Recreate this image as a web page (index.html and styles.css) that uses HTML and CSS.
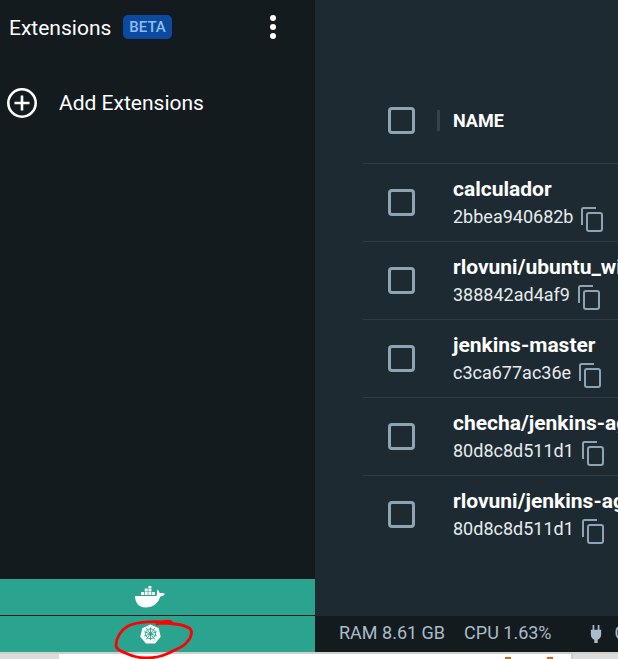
FILE: index.html
```html
<!DOCTYPE html>
<html lang="en">
<head>
    <meta charset="UTF-8">
    <title>Docker Desktop</title>
    <link rel="stylesheet" href="styles.css">
</head>
<body>
<div class="app">
    <div class="sidebar">
        <div class="side-head">
            <span class="side-title">Extensions</span>
            <span class="beta">BETA</span>
            <svg class="more" width="6" height="24" viewBox="0 0 6 24"><circle cx="3" cy="3" r="3"/><circle cx="3" cy="12" r="3"/><circle cx="3" cy="21" r="3"/></svg>
        </div>
        <div class="add-row">
            <svg width="32" height="32" viewBox="0 0 32 32" fill="none" stroke="#fff"><circle cx="16" cy="16" r="13.700" stroke-width="2.600"/><path d="M16 8.500v15M8.500 16h15" stroke-width="2.600"/></svg>
            <span>Add Extensions</span>
        </div>
        <div class="side-spacer"></div>
        <div class="green-btn docker">
            <svg width="30" height="22" viewBox="0 0 30 22" fill="#fff"><path d="M6 6h3v3H6zM9.700 6h3v3h-3zM13.400 6h3v3h-3zM9.700 2.500h3v3h-3zM13.400 2.500h3v3h-3zM13.400-1h3v3h-3zM17 6h3v3h-3z"/><path d="M0 10h21.500c.6-1 .4-4 .8-6.500 1.200.8 2.200 2.500 2.500 4 1.500-.7 3.500-.5 5 .3-.8 1.800-2.500 2.800-4.500 2.700C23.500 17 18 21.500 10.500 21.500 3.500 21.500 0 16 0 10z"/></svg>
        </div>
        <div class="green-btn kube">
            <svg width="21" height="20" viewBox="0 0 22 22" preserveAspectRatio="none"><path d="M11 .5l8.600 4.100 2.100 9.300-5.900 7.500H6.200L.3 13.900l2.100-9.300z" fill="#fff"/><g fill="none" stroke="#2ba48f" stroke-width="1"><circle cx="11" cy="10.800" r="5.400"/><path d="M11 3.800v14M4.500 8.500l13 4.700M17.500 8.500l-13 4.700M6.500 17l9-12.500M15.500 17l-9-12.500"/></g></svg>
        </div>
    </div>
    <div class="main">
        <div class="table">
            <div class="table-head">
                <span class="check"></span>
                <span class="divider"></span>
                <span class="name-col">NAME</span>
            </div>
            <div class="row">
                <span class="check"></span>
                <div class="cell">
                    <div class="name">calculador</div>
                    <div class="id">2bbea940682b <svg class="copy" width="22" height="25" viewBox="0 0 22 25" fill="none" stroke="#8fa4b3" stroke-width="2"><path d="M1 18V2.500Q1 1 2.500 1H15"/><rect x="6" y="6" width="15" height="18" rx="2"/></svg></div>
                </div>
            </div>
            <div class="row">
                <span class="check"></span>
                <div class="cell">
                    <div class="name">rlovuni/ubuntu_wi</div>
                    <div class="id">388842ad4af9 <svg class="copy" width="22" height="25" viewBox="0 0 22 25" fill="none" stroke="#8fa4b3" stroke-width="2"><path d="M1 18V2.500Q1 1 2.500 1H15"/><rect x="6" y="6" width="15" height="18" rx="2"/></svg></div>
                </div>
            </div>
            <div class="row">
                <span class="check"></span>
                <div class="cell">
                    <div class="name">jenkins-master</div>
                    <div class="id">c3ca677ac36e <svg class="copy" width="22" height="25" viewBox="0 0 22 25" fill="none" stroke="#8fa4b3" stroke-width="2"><path d="M1 18V2.500Q1 1 2.500 1H15"/><rect x="6" y="6" width="15" height="18" rx="2"/></svg></div>
                </div>
            </div>
            <div class="row">
                <span class="check"></span>
                <div class="cell">
                    <div class="name">checha/jenkins-ag</div>
                    <div class="id">80d8c8d511d1 <svg class="copy" width="22" height="25" viewBox="0 0 22 25" fill="none" stroke="#8fa4b3" stroke-width="2"><path d="M1 18V2.500Q1 1 2.500 1H15"/><rect x="6" y="6" width="15" height="18" rx="2"/></svg></div>
                </div>
            </div>
            <div class="row last">
                <span class="check"></span>
                <div class="cell">
                    <div class="name">rlovuni/jenkins-ag</div>
                    <div class="id">80d8c8d511d1 <svg class="copy" width="22" height="25" viewBox="0 0 22 25" fill="none" stroke="#8fa4b3" stroke-width="2"><path d="M1 18V2.500Q1 1 2.500 1H15"/><rect x="6" y="6" width="15" height="18" rx="2"/></svg></div>
                </div>
            </div>
        </div>
        <div class="status">
            <span>RAM 8.61 GB</span>
            <span class="cpu">CPU 1.63%</span>
            <svg class="plug" width="12" height="18" viewBox="0 0 14 19" fill="#a9bcc9" preserveAspectRatio="none"><path d="M3 0h2v5H3zM9 0h2v5H9zM1 5h12v5c0 3-2 5-4 5.500V19H5v-3.500C3 15 1 13 1 10z"/></svg>
            <span>C</span>
        </div>
    </div>
</div>
<div class="taskbar">
    <div class="window">
        <span class="mark"></span>
        <span class="mark"></span>
    </div>
</div>
<svg class="scribble" width="84" height="42" viewBox="0 0 84 42" fill="none" stroke="#f00" stroke-width="2.800" stroke-linecap="round" stroke-linejoin="round"><path d="M44 6C50 3 60 2 58 5 45 3 25 3 15 8 8 12 3 20 3 27 3 31 6 32 10 34 18 38 25 40 33 40 42 40 50 38 56 35 62 31 70 30 74 24 79 19 80 12 76 10 70 6 60 5 44 5"/></svg>
</body>
</html>
```

FILE: styles.css
```css
html, body {
    margin: 0;
    padding: 0;
}
body {
    width: 618px;
    height: 659px;
    overflow: hidden;
    position: relative;
    font-family: Roboto, "Liberation Sans", sans-serif;
    background: #dddcd9;
}
.app {
    display: flex;
    height: 652px;
}
.sidebar {
    width: 315px;
    flex-shrink: 0;
    display: flex;
    flex-direction: column;
    background: #141b1f;
    color: #fff;
}
.side-head {
    display: flex;
    align-items: center;
    height: 54px;
    padding-left: 9px;
    font-size: 21px;
}
.side-title {
    padding-top: 2px;
}
.beta {
    margin-left: 12px;
    padding: 0 6px;
    height: 24px;
    line-height: 24px;
    border-radius: 5px;
    background: #0b4a9f;
    color: #8ebdf2;
    font-size: 15px;
    font-weight: 500;
}
.more {
    margin-left: 98px;
    fill: #fff;
}
.add-row {
    display: flex;
    align-items: center;
    gap: 21px;
    height: 32px;
    margin-top: 33px;
    padding-left: 6px;
    font-size: 21px;
}
.side-spacer {
    flex: 1;
}
.green-btn {
    display: flex;
    align-items: center;
    justify-content: center;
    box-sizing: border-box;
    padding-right: 15px;
    background: #2ba48f;
}
.docker {
    height: 37px;
    border-bottom: 1px solid #10201f;
}
.kube {
    height: 36px;
}
.main {
    flex: 1;
    min-width: 0;
    display: flex;
    flex-direction: column;
    background: #1e2a31;
}
.table {
    flex: 1;
    padding: 82px 0 0 48px;
    overflow: hidden;
}
.table-head {
    display: flex;
    align-items: flex-start;
    height: 81px;
    border-bottom: 1px solid #2f3b41;
}
.check {
    display: block;
    box-sizing: border-box;
    width: 27px;
    height: 27px;
    margin-left: 25px;
    border: 3px solid #8fa4b3;
    border-radius: 4px;
    flex-shrink: 0;
}
.table-head .check {
    margin-top: 25px;
}
.divider {
    width: 3px;
    height: 21px;
    margin: 28px 0 0 22px;
    background: #33424d;
}
.name-col {
    margin: 28px 0 0 13px;
    color: #fff;
    font-size: 18px;
    font-weight: 700;
    line-height: 21px;
}
.row {
    display: flex;
    align-items: center;
    height: 77px;
    border-bottom: 1px solid #2f3b41;
    white-space: nowrap;
}
.row.last {
    border-bottom: 0;
}
.cell {
    margin-left: 38px;
    color: #fff;
}
.name {
    font-size: 21px;
    font-weight: 700;
    line-height: 27px;
}
.id {
    display: flex;
    align-items: flex-start;
    gap: 8px;
    font-size: 18px;
    line-height: 27px;
    height: 27px;
    color: #e6ebee;
}
.copy {
    margin-top: 4px;
}
.status {
    display: flex;
    align-items: center;
    box-sizing: border-box;
    height: 36px;
    flex-shrink: 0;
    background: #141b1f;
    color: #a9bcc9;
    font-size: 18px;
    padding: 0 0 3px 24px;
    white-space: nowrap;
}
.cpu {
    margin-left: 19px;
}
.plug {
    flex-shrink: 0;
    margin: 3px 13px 0 38px;
}
.taskbar {
    box-sizing: border-box;
    height: 7px;
    padding-left: 59px;
    border-top: 2px solid #cfcfcd;
}
.window {
    display: flex;
    align-items: flex-end;
    gap: 36px;
    box-sizing: border-box;
    width: 514px;
    height: 5px;
    padding-left: 446px;
    background: #fff;
    border-right: 2px solid #cfcfcd;
}
.mark {
    width: 6px;
    height: 2px;
    background: #d2691e;
}
.scribble {
    position: absolute;
    left: 113px;
    top: 618px;
}
```
